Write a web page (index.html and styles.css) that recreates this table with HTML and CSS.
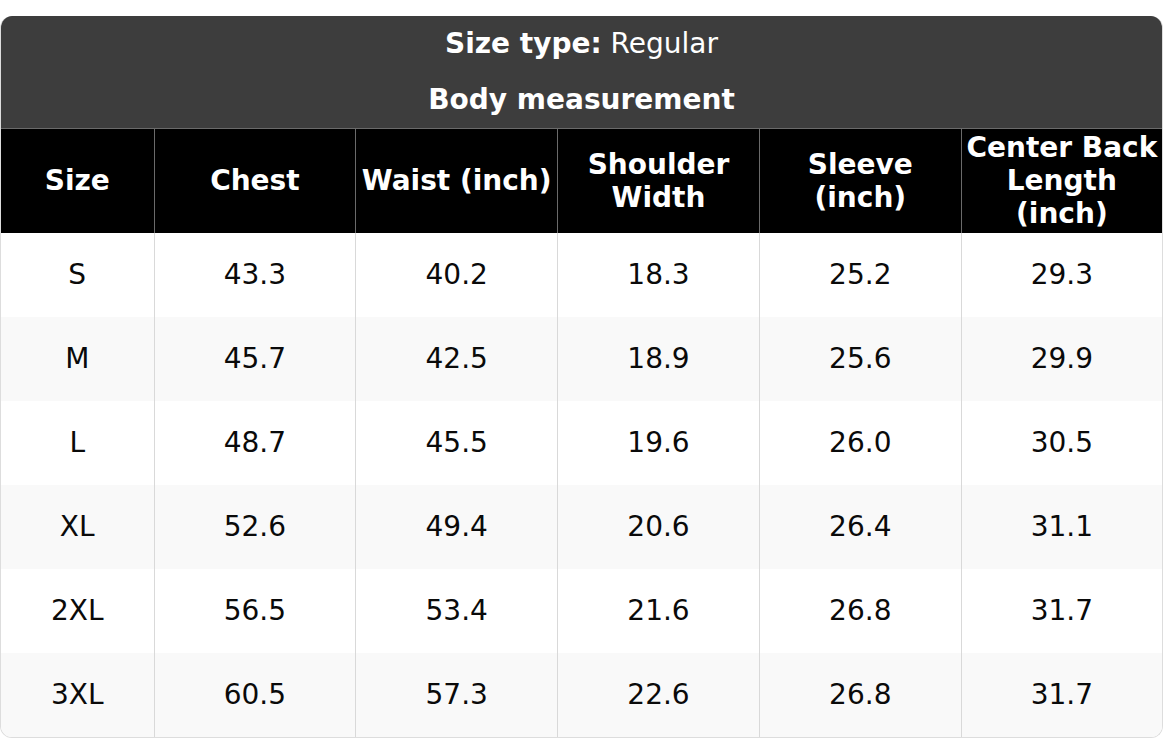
FILE: index.html
```html
<!DOCTYPE html>
<html lang="en">
<head>
<meta charset="utf-8">
<title>Size chart</title>
<link rel="stylesheet" href="styles.css">
</head>
<body>
<div class="chart">
  <div class="title">
    <div class="title-line"><b>Size type:</b> Regular</div>
    <div class="title-line"><b>Body measurement</b></div>
  </div>
  <table class="grid">
    <colgroup>
      <col class="c-size">
      <col class="c-val"><col class="c-val"><col class="c-val"><col class="c-val"><col class="c-last">
    </colgroup>
    <thead>
      <tr>
        <th>Size</th>
        <th>Chest</th>
        <th>Waist (inch)</th>
        <th>Shoulder<br>Width</th>
        <th>Sleeve<br>(inch)</th>
        <th>Center Back<br>Length<br>(inch)</th>
      </tr>
    </thead>
    <tbody>
      <tr><td>S</td><td>43.3</td><td>40.2</td><td>18.3</td><td>25.2</td><td>29.3</td></tr>
      <tr><td>M</td><td>45.7</td><td>42.5</td><td>18.9</td><td>25.6</td><td>29.9</td></tr>
      <tr><td>L</td><td>48.7</td><td>45.5</td><td>19.6</td><td>26.0</td><td>30.5</td></tr>
      <tr><td>XL</td><td>52.6</td><td>49.4</td><td>20.6</td><td>26.4</td><td>31.1</td></tr>
      <tr><td>2XL</td><td>56.5</td><td>53.4</td><td>21.6</td><td>26.8</td><td>31.7</td></tr>
      <tr><td>3XL</td><td>60.5</td><td>57.3</td><td>22.6</td><td>26.8</td><td>31.7</td></tr>
    </tbody>
  </table>
</div>
</body>
</html>
```
FILE: styles.css
```css
html, body {
  margin: 0;
  padding: 0;
  background: #ffffff;
}
body {
  font-family: "DejaVu Sans", "Liberation Sans", sans-serif;
  padding-top: 16px;
}
.chart {
  width: 1163px;
  border: 1.5px solid #dddddd;
  border-top: none;
  border-radius: 12px;
  overflow: hidden;
  box-sizing: border-box;
}
.title {
  background: #3d3d3d;
  color: #ffffff;
  text-align: center;
  font-size: 28px;
  border-bottom: 1.5px solid #6a6a6a;
}
.title-line {
  height: 56px;
  line-height: 56px;
}
.title-line b { font-weight: bold; }
.grid {
  width: 100%;
  border-collapse: collapse;
  table-layout: fixed;
}
.c-size { width: 153px; }
.c-val { width: 201.8px; }
.grid th {
  background: #000000;
  color: #ffffff;
  font-size: 28px;
  font-weight: bold;
  line-height: 33px;
  height: 103.5px;
  padding: 0;
  text-align: center;
  vertical-align: middle;
  border-left: 1.5px solid #6a6a6a;
}
.grid th:first-child { border-left: none; }
.grid td {
  font-size: 28px;
  color: #0a0a0a;
  height: 84px;
  padding: 0;
  text-align: center;
  vertical-align: middle;
  border-left: 1.5px solid #d9d9d9;
}
.grid td:first-child { border-left: none; }
.grid tbody tr:nth-child(even) td { background: #f9f9f9; }
```
